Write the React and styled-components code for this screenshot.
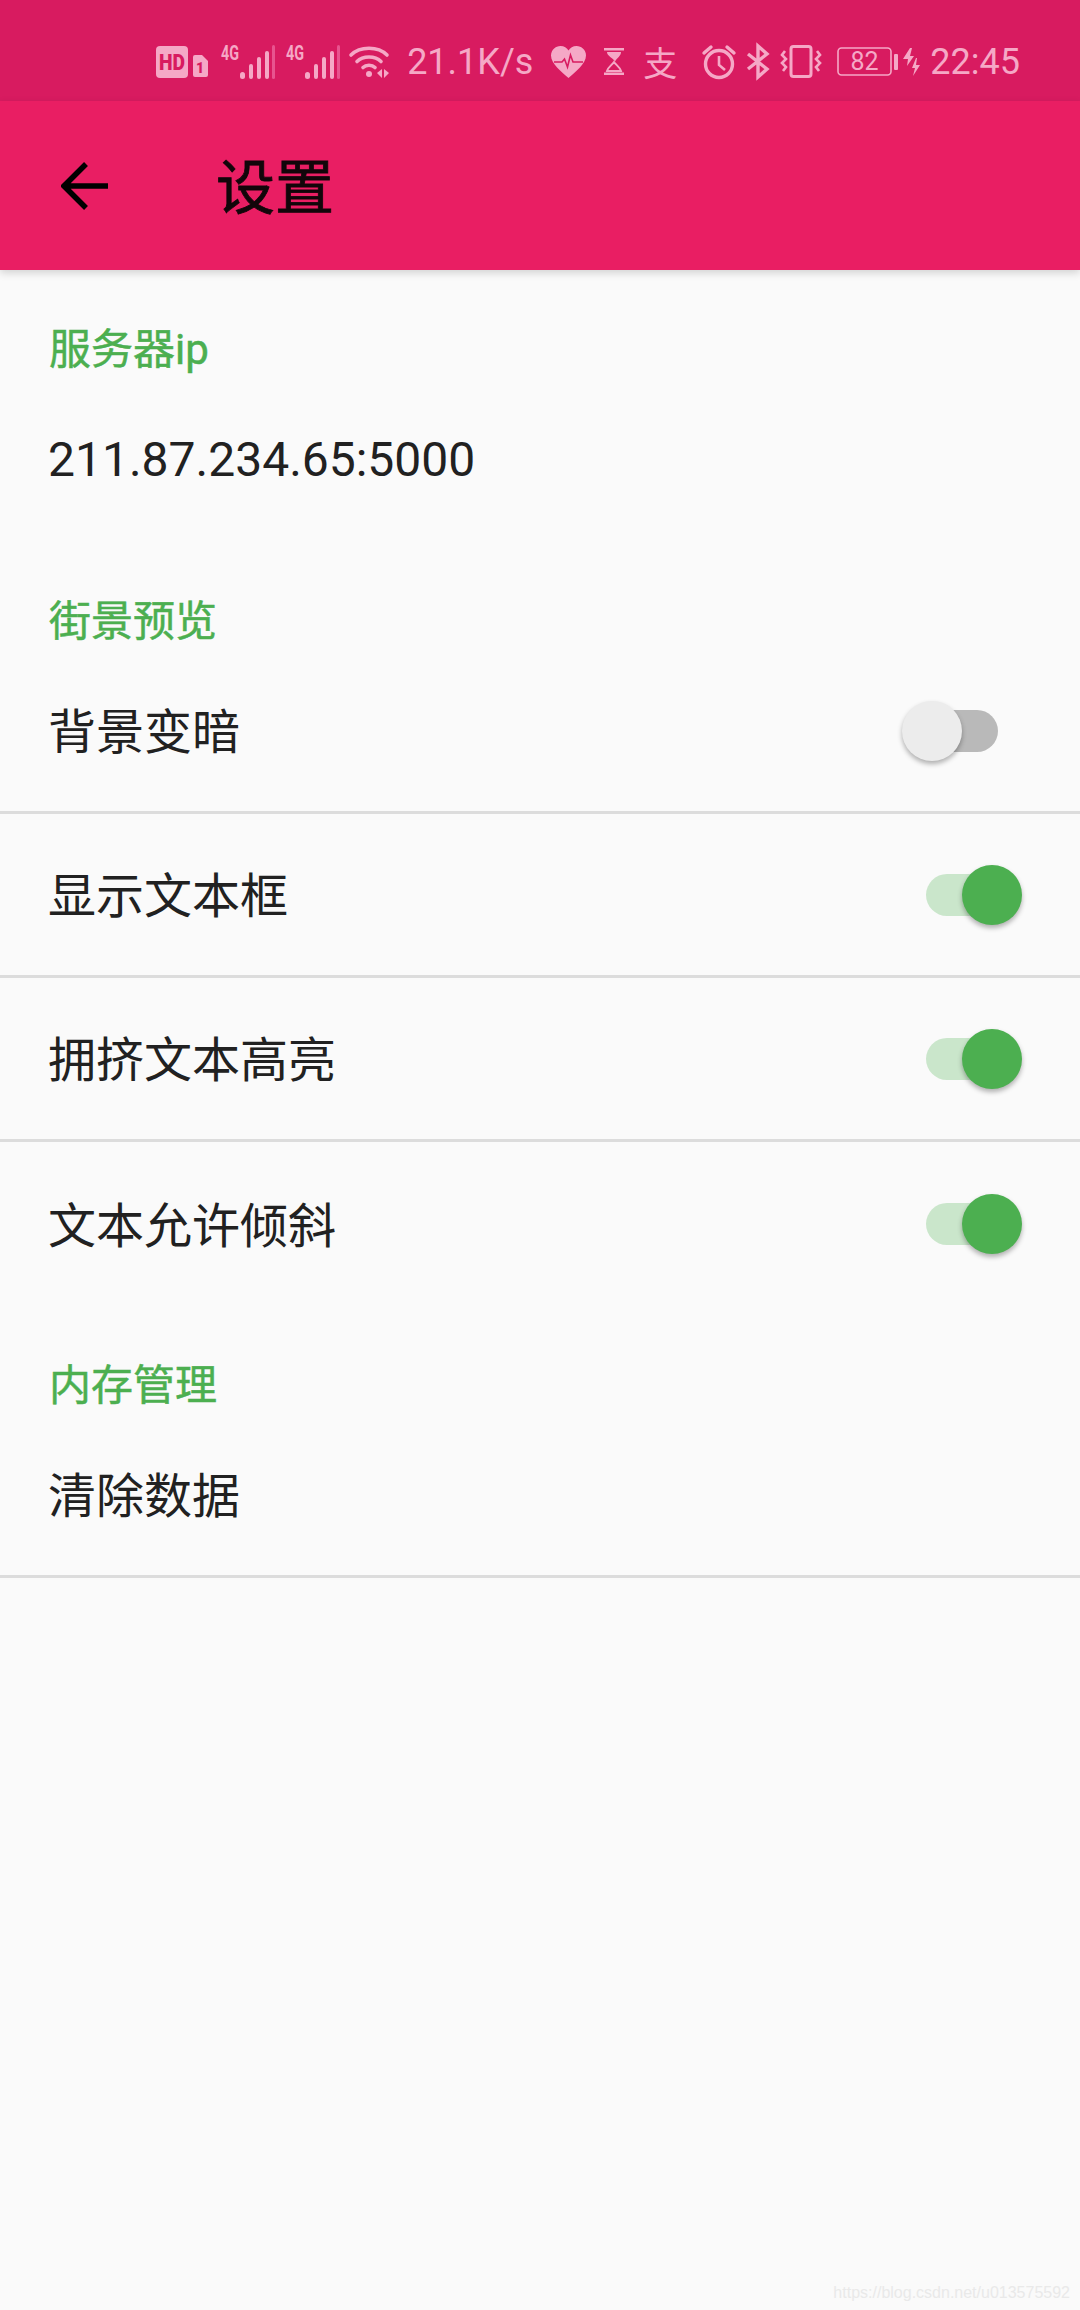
import React from "react";
import styled, { createGlobalStyle } from "styled-components";

const GlobalStyle = createGlobalStyle`
  html, body {
    margin: 0;
    padding: 0;
    background: #fafafa;
  }
`;

const FONT = `Roboto, "Noto Sans CJK SC", sans-serif`;
const TINT = "#f5a8c6";
const DIM = "#e8548f";

const Page = styled.div`
  position: relative;
  min-height: 2310px;
  background: #fafafa;
  font-family: ${FONT};
  overflow: hidden;
`;

const StatusBar = styled.div`
  height: 101px;
  background: #d81b60;
  display: flex;
  align-items: center;
  justify-content: flex-end;
  padding: 20px 60px 0 0;
  color: ${TINT};
  box-sizing: border-box;
`;

const StatusIcon = styled.svg`
  display: block;
  flex: none;
  overflow: visible;
  margin-left: ${(p) => p.$gap || 0}px;
  margin-top: ${(p) => p.$top || 2}px;
`;

const StatusText = styled.span`
  font-size: 36px;
  line-height: 40px;
  margin-left: ${(p) => p.$gap || 0}px;
  margin-top: 3px;
  white-space: nowrap;
`;

const AlipayGlyph = styled(StatusText)`
  font-family: "Noto Sans CJK SC", sans-serif;
  font-size: 34px;
`;

const Toolbar = styled.header`
  height: 169px;
  background: #e91e63;
  display: flex;
  align-items: center;
  box-shadow: 0 3px 8px rgba(0, 0, 0, 0.16);
  position: relative;
`;

const BackIcon = styled.svg`
  display: block;
  margin-left: 61px;
  flex: none;
`;

const Title = styled.h1`
  margin: 5px 0 0 108px;
  font-size: 59px;
  font-weight: 400;
  color: #12060a;
  line-height: 1;
  -webkit-text-stroke: 0.8px #12060a;
`;

const Section = styled.section`
  padding-top: 48px;
`;

const Category = styled.div`
  height: 60px;
  box-sizing: border-box;
  display: flex;
  align-items: center;
  padding: 0 0 5px 49px;
  font-size: 42px;
  font-weight: 400;
  color: #4caf50;
  -webkit-text-stroke: 0.5px #4caf50;
`;

const Row = styled.div`
  height: ${(p) => (p.$divider ? 161 : 164)}px;
  display: flex;
  align-items: center;
  justify-content: space-between;
  padding: 0 58px 0 48px;
  font-size: 48px;
  color: #212121;
  border-bottom: ${(p) => (p.$divider ? "3px solid #dcdcdc" : "none")};
`;

const RowLabel = styled.span`
  margin-top: ${(p) => (p.$value ? 0 : 5)}px;
  line-height: 1;
`;

const SwitchTrack = styled.div`
  position: relative;
  width: 72px;
  height: 42px;
  margin-right: 24px;
  border-radius: 21px;
  background: ${(p) => (p.$on ? "#cae6cb" : "#b9b9b9")};
`;

const SwitchThumb = styled.div`
  position: absolute;
  top: -9px;
  left: ${(p) => (p.$on ? "36px" : "-24px")};
  width: 60px;
  height: 60px;
  border-radius: 50%;
  background: ${(p) => (p.$on ? "#4caf50" : "#ececec")};
  box-shadow: 0 3px 5px rgba(0, 0, 0, 0.3);
`;

const Watermark = styled.div`
  position: absolute;
  right: 10px;
  bottom: 8px;
  font-family: "Liberation Sans", sans-serif;
  font-size: 16px;
  color: #e9e9e9;
`;

function Signal({ gap }) {
  return (
    <StatusIcon $gap={gap} width="53" height="34" viewBox="0 0 53 34" fill="currentColor">
      <text x="0" y="15" fontSize="20" fontWeight="700" fontFamily="Roboto, sans-serif" textLength="18" lengthAdjust="spacingAndGlyphs">4G</text>
      <rect x="19" y="27" width="5" height="7" rx="2.5" />
      <rect x="28" y="19" width="4" height="15" rx="2" />
      <rect x="36" y="12" width="4" height="22" rx="2" />
      <rect x="44" y="6" width="4" height="28" rx="2" />
      <rect x="51" y="0" width="3" height="34" rx="1.5" fill={DIM} />
    </StatusIcon>
  );
}

function StatusIcons() {
  return (
    <>
      <StatusIcon width="32" height="32" viewBox="0 0 32 32">
        <rect width="32" height="32" rx="4" fill="currentColor" />
        <text x="16" y="23.500" fontSize="22" fontWeight="900" textAnchor="middle" fill="#d81b60" fontFamily="Roboto, sans-serif" textLength="26" lengthAdjust="spacingAndGlyphs">HD</text>
      </StatusIcon>
      <StatusIcon $gap={5} $top={10} width="15" height="22" viewBox="0 0 15 22">
        <path d="M2 0h7l6 6v14a2 2 0 0 1-2 2H2a2 2 0 0 1-2-2V2a2 2 0 0 1 2-2z" fill="currentColor" />
        <text x="7" y="18" fontSize="14" fontWeight="900" textAnchor="middle" fill="#d81b60" fontFamily="Roboto, sans-serif">1</text>
      </StatusIcon>
      <Signal gap={13} />
      <Signal gap={12} />
      <StatusIcon $gap={10} width="40" height="32" viewBox="0 0 40 32" fill="none" stroke="currentColor" strokeWidth="3.6" strokeLinecap="round">
        <path d="M2 9C11 0 29 0 38 9" />
        <path d="M8 15.5C14 9.5 26 9.5 32 15.5" />
        <path d="M14 21.5C17 18.5 23 18.5 26 21.5" />
        <circle cx="20" cy="28" r="3" fill="currentColor" stroke="none" />
        <path d="M33 23v9l-5-5zM35 23v9l5-5z" fill="currentColor" stroke="none" />
      </StatusIcon>
      <StatusText $gap={18}>21.1K/s</StatusText>
      <StatusIcon $gap={18} width="35" height="32" viewBox="0 0 35 32">
        <path d="M17.5 32C11 26 0 18 0 9.500C0 4 4.500 0 9.500 0 13 0 16 1.800 17.500 4.500 19 1.800 22 0 25.500 0 30.500 0 35 4 35 9.500 35 18 24 26 17.500 32z" fill="currentColor" />
        <path d="M3 16h8l2.500-3 3 8 3-12 2.500 7h10" fill="none" stroke="#d81b60" strokeWidth="1.600" />
      </StatusIcon>
      <StatusIcon $gap={18} width="20" height="27" viewBox="0 0 20 27" fill="currentColor">
        <rect width="20" height="2.500" />
        <rect y="24.500" width="20" height="2.500" />
        <path d="M3 4h14c0 4-4 6-6 9.500C9 10 3 8 3 4z" />
        <path d="M10 14c2 3 6 5 7 9H3c1-4 5-6 7-9z" fill="none" stroke="currentColor" strokeWidth="2" />
      </StatusIcon>
      <AlipayGlyph $gap={19}>支</AlipayGlyph>
      <StatusIcon $gap={25} width="34" height="34" viewBox="0 0 34 34" fill="none" stroke="currentColor" strokeWidth="3.400">
        <circle cx="17" cy="19" r="13.500" />
        <path d="M17 11v9l6 5" strokeWidth="2.600" />
        <path d="M2 8l7-6M32 8l-7-6" strokeLinecap="round" />
      </StatusIcon>
      <StatusIcon $gap={11} width="22" height="33" viewBox="0 0 22 33" fill="none" stroke="currentColor" strokeWidth="3.400">
        <path d="M1 9l19 15-9 8V1l9 8L1 24" />
      </StatusIcon>
      <StatusIcon $gap={11} width="42" height="33" viewBox="0 0 42 33" fill="none" stroke="currentColor" strokeWidth="3">
        <rect x="11" y="1.500" width="20" height="30" rx="2.500" />
        <path d="M5 6L2 10l4 4-4 4 4 4-3 4M37 6l3 4-4 4 4 4-4 4 3 4" strokeWidth="2.600" />
      </StatusIcon>
      <StatusIcon $gap={15} width="55" height="29" viewBox="0 0 55 29">
        <rect x="1" y="1" width="53" height="27" rx="3.500" fill="none" stroke="currentColor" strokeWidth="1.600" />
        <text x="27.500" y="23" fontSize="25" textAnchor="middle" fill="currentColor" fontFamily="Roboto, sans-serif">82</text>
      </StatusIcon>
      <StatusIcon $gap={2} width="4" height="16" viewBox="0 0 4 16" fill="currentColor">
        <rect width="4" height="16" rx="1" />
      </StatusIcon>
      <StatusIcon $gap={5} width="17" height="28" viewBox="0 0 17 28" fill="currentColor">
        <path d="M7 0L0 11h5l-1 7 7-10H7l2-8zM13 10l-4 10h3l-2 8 7-11h-4l1-7z" />
      </StatusIcon>
      <StatusText $gap={10}>22:45</StatusText>
    </>
  );
}

function SettingSwitch({ on }) {
  return (
    <SwitchTrack $on={on}>
      <SwitchThumb $on={on} />
    </SwitchTrack>
  );
}

export default function App() {
  return (
    <Page>
      <GlobalStyle />
      <StatusBar>
        <StatusIcons />
      </StatusBar>
      <Toolbar>
        <BackIcon width="47" height="48" viewBox="0 0 47 48" fill="none" stroke="#000" strokeWidth="5.500">
          <path d="M47 24H4M25 2L3 24l22 22" />
        </BackIcon>
        <Title>设置</Title>
      </Toolbar>

      <Section>
        <Category>服务器ip</Category>
        <Row>
          <RowLabel $value>211.87.234.65:5000</RowLabel>
        </Row>
      </Section>

      <Section>
        <Category>街景预览</Category>
        <Row $divider>
          <RowLabel>背景变暗</RowLabel>
          <SettingSwitch />
        </Row>
        <Row $divider>
          <RowLabel>显示文本框</RowLabel>
          <SettingSwitch on />
        </Row>
        <Row $divider>
          <RowLabel>拥挤文本高亮</RowLabel>
          <SettingSwitch on />
        </Row>
        <Row>
          <RowLabel>文本允许倾斜</RowLabel>
          <SettingSwitch on />
        </Row>
      </Section>

      <Section>
        <Category>内存管理</Category>
        <Row $divider>
          <RowLabel>清除数据</RowLabel>
        </Row>
      </Section>

      <Watermark>https://blog.csdn.net/u013575592</Watermark>
    </Page>
  );
}
